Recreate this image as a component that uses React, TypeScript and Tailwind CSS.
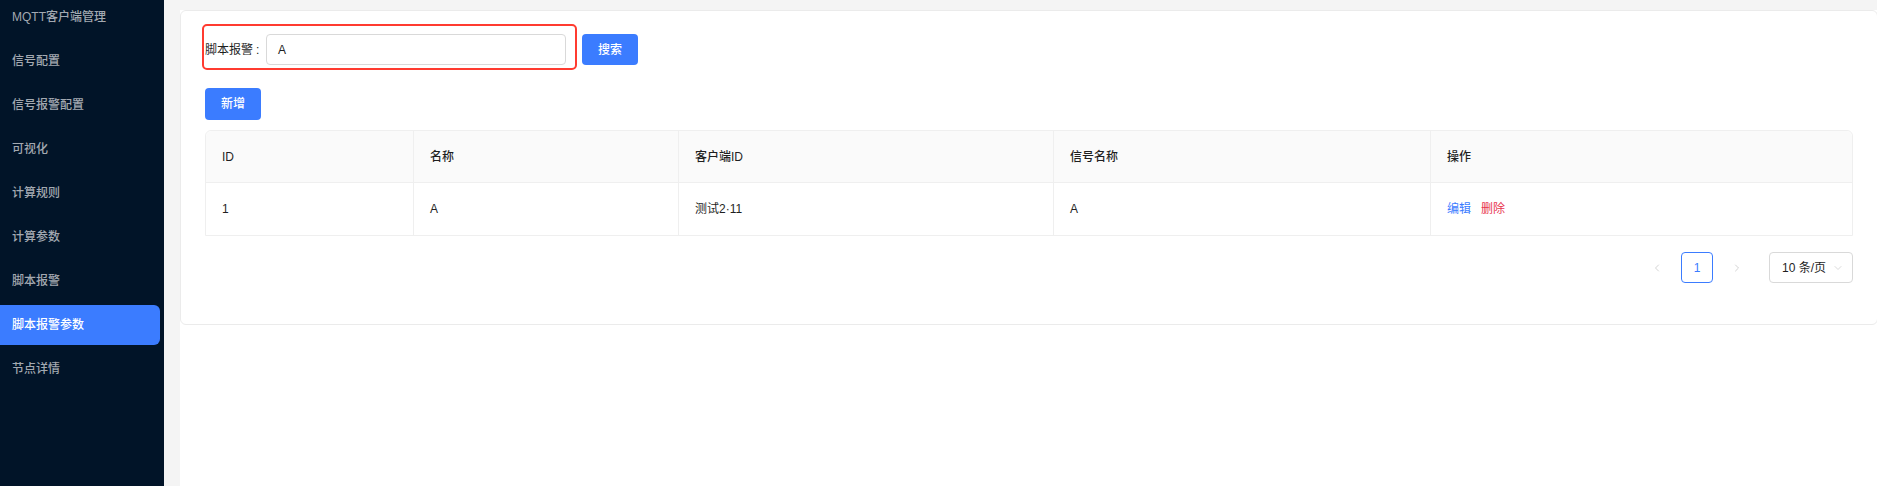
import { ChevronDown, ChevronLeft, ChevronRight } from "lucide-react";

const menu = [
  "MQTT客户端管理",
  "信号配置",
  "信号报警配置",
  "可视化",
  "计算规则",
  "计算参数",
  "脚本报警",
  "脚本报警参数",
  "节点详情",
];

const cols = ["ID", "名称", "客户端ID", "信号名称", "操作"];

const rows = [{ id: "1", name: "A", client: "测试2·11", signal: "A" }];

const grid = "grid grid-cols-[207px_265px_375px_377px_1fr]";

function Sidebar() {
  return (
    <aside className="h-full w-[164px] shrink-0 overflow-hidden bg-[#011428]">
      <nav className="-mt-[3px] flex flex-col gap-1">
        {menu.map((label) => {
          const active = label === "脚本报警参数";
          return (
            <div
              key={label}
              className={
                active
                  ? "flex h-10 w-[160px] items-center rounded-r-md bg-[#3b7cff] pl-3 text-[12px] font-medium text-white"
                  : "flex h-10 w-[160px] items-center pl-3 text-[12px] font-medium text-[#a3a9b1]"
              }
            >
              {label}
            </div>
          );
        })}
      </nav>
    </aside>
  );
}

function SearchBar() {
  return (
    <div className="flex h-[31px] items-center">
      <div className="relative flex h-full items-center">
        {/* red highlight drawn over the form item */}
        <span className="pointer-events-none absolute -bottom-[5px] -left-[3px] -right-[11px] -top-[10px] rounded-[5px] border-[2.5px] border-[#ff3b30]" />
        <label className="flex w-[61px] items-center text-[12px] text-[#1f1f1f]">
          脚本报警<span className="ml-[3px]">:</span>
        </label>
        <div className="flex h-full w-[300px] items-center rounded-[4px] border border-[#d9d9d9] px-[11px] text-[12px] text-[#1f1f1f]">
          A
        </div>
      </div>
      <button className="ml-4 h-full w-[56px] rounded-[4px] bg-[#3b7cff] text-[12px] font-medium text-white">
        搜索
      </button>
    </div>
  );
}

function DataTable() {
  return (
    <div className="mt-[10px] rounded-t-md border border-[#efefef] text-[12px] text-[#1f1f1f]">
      <div className={`${grid} h-[52px] rounded-t-md border-b border-[#efefef] bg-[#fafafa] font-medium`}>
        {cols.map((c, i) => (
          <div key={c} className={`flex items-center px-4 ${i > 0 ? "border-l border-[#efefef]" : ""}`}>
            {c}
          </div>
        ))}
      </div>
      {rows.map((r) => (
        <div key={r.id} className={`${grid} h-[52px]`}>
          <div className="flex items-center px-4">{r.id}</div>
          <div className="flex items-center border-l border-[#efefef] px-4">{r.name}</div>
          <div className="flex items-center border-l border-[#efefef] px-4">{r.client}</div>
          <div className="flex items-center border-l border-[#efefef] px-4">{r.signal}</div>
          <div className="flex items-center gap-[10px] border-l border-[#efefef] px-4">
            <span className="text-[#3b7cff]">编辑</span>
            <span className="text-[#e8344e]">删除</span>
          </div>
        </div>
      ))}
    </div>
  );
}

function Pagination() {
  return (
    <div className="mt-4 flex h-[31px] items-center justify-end text-[12px]">
      <div className="flex h-full w-8 items-center justify-center text-[#c4c4c4]">
        <ChevronLeft size={12} strokeWidth={1.5} />
      </div>
      <div className="ml-2 flex h-full w-8 items-center justify-center rounded-[4px] border border-[#3b7cff] text-[#3b7cff]">
        1
      </div>
      <div className="ml-2 flex h-full w-8 items-center justify-center text-[#c4c4c4]">
        <ChevronRight size={12} strokeWidth={1.5} />
      </div>
      <div className="ml-4 flex h-full w-[84px] items-center justify-between rounded-[4px] border border-[#d9d9d9] pl-3 pr-[8px] text-[#1f1f1f]">
        <span>10 条/页</span>
        <ChevronDown size={12} strokeWidth={1.25} className="text-[#c4c4c4]" />
      </div>
    </div>
  );
}

export default function App() {
  return (
    <div
      className="flex h-[486px] w-full overflow-hidden bg-white"
      style={{ fontFamily: '"Liberation Sans", "Noto Sans CJK SC", sans-serif' }}
    >
      <Sidebar />
      <main className="flex min-w-0 flex-1 flex-col bg-[#f4f4f4] pl-4 pt-[10px]">
        <div className="flex-1 overflow-hidden bg-white">
          <section className="w-[1698px] rounded-md border border-[#ebebeb] bg-white px-6 pb-[41px] pt-[23px]">
            <SearchBar />
            <button className="mt-[23px] h-8 w-[56px] rounded-[4px] bg-[#3b7cff] text-[12px] font-medium text-white">
              新增
            </button>
            <DataTable />
            <Pagination />
          </section>
        </div>
      </main>
    </div>
  );
}
